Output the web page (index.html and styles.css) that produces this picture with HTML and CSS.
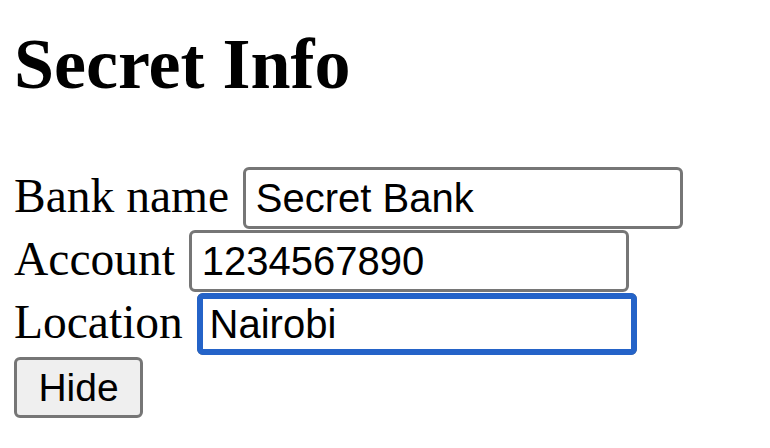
FILE: index.html
```html
<!DOCTYPE html>
<html>
<head>
<meta charset="utf-8">
<link rel="stylesheet" href="styles.css">
</head>
<body>
<section class="page">
  <h1 class="title">Secret Info</h1>
  <form class="form">
    <div class="row"><label class="label" for="bank">Bank name</label> <input class="field" id="bank" type="text" value="Secret Bank"></div>
    <div class="row"><label class="label" for="acct">Account</label> <input class="field" id="acct" type="text" value="1234567890"></div>
    <div class="row"><label class="label" for="loc">Location</label> <input class="field focused" id="loc" type="text" value="Nairobi"></div>
    <div class="row"><button class="btn" type="button">Hide</button></div>
  </form>
</section>
</body>
</html>
```
FILE: styles.css
```css
html, body {
  margin: 0;
  padding: 0;
  background: #ffffff;
}
body {
  font-family: "Liberation Serif", "Times New Roman", serif;
  font-size: 47px;
  color: #000;
}
.page {
  padding: 0 14px;
}
.title {
  font-family: "Liberation Serif", "Times New Roman", serif;
  font-weight: bold;
  font-size: 72px;
  line-height: normal;
  margin: 23px 0 61px 0;
}
.form {
  margin: 0;
}
.row {
  height: 63px;
  white-space: nowrap;
}
.label {
  font-size: 47.5px;
}
.field {
  box-sizing: border-box;
  width: 440px;
  height: 62px;
  font-family: "Liberation Sans", Arial, sans-serif;
  font-size: 40px;
  color: #000;
  padding: 0 10px;
  border: 3px solid #767676;
  border-radius: 6px;
  background: #fff;
  margin: 0 0 0 2px;
  vertical-align: baseline;
}
.focused {
  outline: 6px solid #2463c8;
  outline-offset: -6px;
}
.btn {
  box-sizing: border-box;
  width: 129px;
  height: 61px;
  font-family: "Liberation Sans", Arial, sans-serif;
  font-size: 39px;
  color: #000;
  padding: 0;
  border: 3px solid #767676;
  border-radius: 6px;
  background: #efefef;
  margin: 1px 0 0 0;
}
```
